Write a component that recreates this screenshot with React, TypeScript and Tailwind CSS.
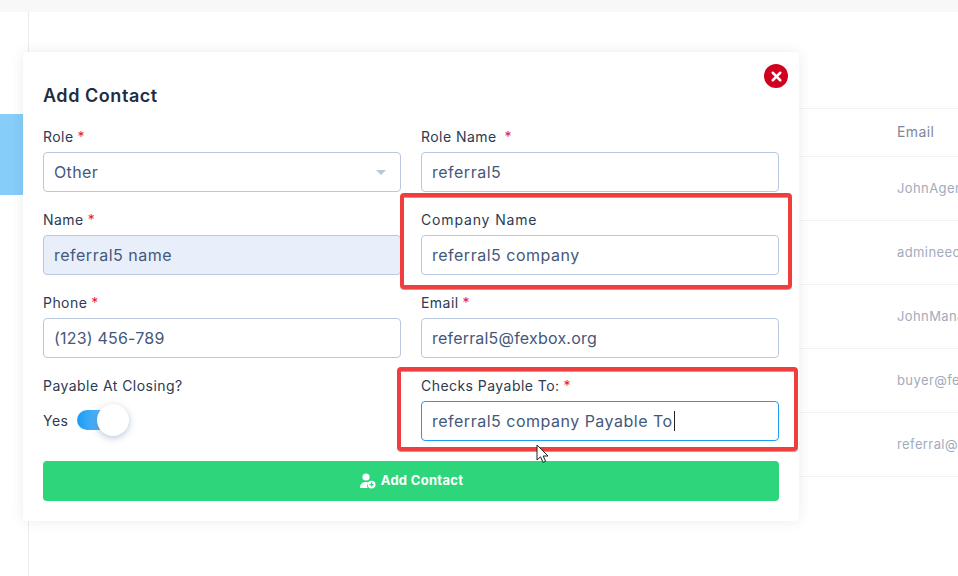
import { LuX } from 'react-icons/lu'

const rows = ['JohnAgent@fexbox.org', 'admineeoffice@fexbox.org', 'JohnManager@fexbox.org', 'buyer@fexbox.org', 'referral@fexbox.org']

const labelClass = 'block h-[25px] text-[14px] leading-[20px] text-[#2d3a50]'
const fieldClass = 'flex h-10 items-center rounded border px-[10px] text-[16px] text-[#44587a]'

function Label({ text, gap = 'ml-1' }: { text: string; gap?: string }) {
    return (
        <label className={`${labelClass} tracking-[0.45px]`}>
            {text}
            <span className={`${gap} text-[#e5173f]`}>*</span>
        </label>
    )
}

function Field({ value, className = 'tracking-[0.5px]' }: { value: string; className?: string }) {
    return <div className={`${fieldClass} border-[#b9c8de] ${className}`}>{value}</div>
}

function Cursor() {
    return (
        <svg width="14" height="20" viewBox="0 0 14 20" className="absolute left-[536px] top-[444px]">
            <path d="M1 1v15l3.5-3.2L7 18.4l2.6-1.2-2.4-5.2H12z" fill="#fff" stroke="#222" strokeWidth="1" />
        </svg>
    )
}

export default function App() {
    return (
        <div className="relative h-[576px] w-[958px] overflow-hidden bg-white font-['Inter',sans-serif]">
            <div className="h-3 bg-[#f8f8f9]" />
            <div className="flex h-[564px]">
                <div className="w-[29px] shrink-0 border-r border-[#e9ebef] pt-[102px]">
                    <div className="h-[81px] w-[23px] bg-[#86cdf9]" />
                </div>
                <div className="min-w-0 flex-1 pt-[96px]">
                    <div className="flex h-[49px] items-center overflow-hidden border-y border-[#f1f2f4] pb-[2px] pl-[868px] text-[14px] tracking-[0.4px] text-[#7d8798]">
                        Email
                    </div>
                    {rows.map((r) => (
                        <div
                            key={r}
                            className="flex h-16 items-center overflow-hidden whitespace-nowrap border-b border-[#f1f2f4] pl-[868px] text-[13px] tracking-[0.4px] text-[#a2abbb]"
                        >
                            {r}
                        </div>
                    ))}
                </div>
            </div>

            <div className="absolute left-[23px] top-[52px] h-[469px] w-[776px] rounded bg-white px-5 pt-8 shadow-[0_0_14px_rgba(30,40,60,0.09)]">
                <button className="absolute right-[11px] top-[12px] flex h-6 w-6 items-center justify-center rounded-full bg-[#d0021f] text-white">
                    <LuX size={15} strokeWidth={4} />
                </button>
                <h2 className="h-[43px] text-[18px] font-semibold leading-6 tracking-[0.55px] text-[#1f2d42]">Add Contact</h2>

                <div className="grid grid-cols-2 gap-x-5 gap-y-[18px]">
                    <div>
                        <Label text="Role" />
                        <div className={`${fieldClass} justify-between border-[#b9c8de] tracking-[0.35px]`}>
                            Other
                            <span className="mr-[4px] h-0 w-0 border-x-[5px] border-t-[5px] border-x-transparent border-t-[#b9c8de]" />
                        </div>
                    </div>
                    <div>
                        <Label text="Role Name" gap="ml-2" />
                        <Field value="referral5" />
                    </div>
                    <div>
                        <Label text="Name" />
                        <Field value="referral5 name" className="bg-[#e8effb] tracking-[0.5px]" />
                    </div>
                    <div>
                        <label className={`${labelClass} tracking-[0.85px]`}>Company Name</label>
                        <Field value="referral5 company" />
                    </div>
                    <div>
                        <Label text="Phone" />
                        <Field value="(123) 456-789" className="tracking-[0.2px]" />
                    </div>
                    <div>
                        <Label text="Email" />
                        <Field value="referral5@fexbox.org" className="tracking-[0.2px]" />
                    </div>
                    <div>
                        <label className={`${labelClass} tracking-[0.45px]`}>Payable At Closing?</label>
                        <div className="flex h-10 items-center gap-[9px] pb-[2px] text-[14px] tracking-[0.45px] text-[#2d3a50]">
                            Yes
                            <div className="relative h-5 w-9 rounded-full bg-gradient-to-r from-[#149cf5] to-[#6cc0f7]">
                                <div className="absolute left-[20px] top-[-6px] h-8 w-8 rounded-full bg-white shadow-[0_2px_7px_rgba(60,90,150,0.35)]" />
                            </div>
                        </div>
                    </div>
                    <div>
                        <Label text="Checks Payable To:" />
                        <div className={`${fieldClass} border-[#1f9cf0] tracking-[0.5px]`}>
                            referral5 company Payable To
                            <span className="ml-px h-[20px] w-px bg-[#222]" />
                        </div>
                    </div>
                </div>

                <button className="mt-5 flex h-10 w-full items-center justify-center gap-[5px] rounded bg-[#2ed67b] text-[13px] font-bold tracking-[0.3px] text-white">
                    <svg width="17" height="16" viewBox="0 0 17 16" fill="#fff">
                        <circle cx="7" cy="4" r="3.6" />
                        <path d="M1 15c0-4 2.5-6 6-6 1 0 2 .2 2.7.5A5 5 0 0 0 8.6 15z" />
                        <circle cx="12.6" cy="11.6" r="3.9" />
                        <path d="M12.6 9.6v4M10.6 11.6h4" stroke="#2ed67b" strokeWidth="1.2" />
                    </svg>
                    Add Contact
                </button>
            </div>

            {/* red annotation boxes from the screenshot */}
            <div className="absolute left-[400px] top-[193px] h-[96px] w-[392px] rounded border-4 border-[#ef3e3e] shadow-[0_1px_0_rgba(80,80,80,0.5),inset_0_1px_0_rgba(80,80,80,0.5)]" />
            <div className="absolute left-[397px] top-[367px] h-[84px] w-[401px] rounded border-4 border-[#ef3e3e] shadow-[0_1px_0_rgba(80,80,80,0.5),inset_0_1px_0_rgba(80,80,80,0.5)]" />
            <Cursor />
        </div>
    )
}
